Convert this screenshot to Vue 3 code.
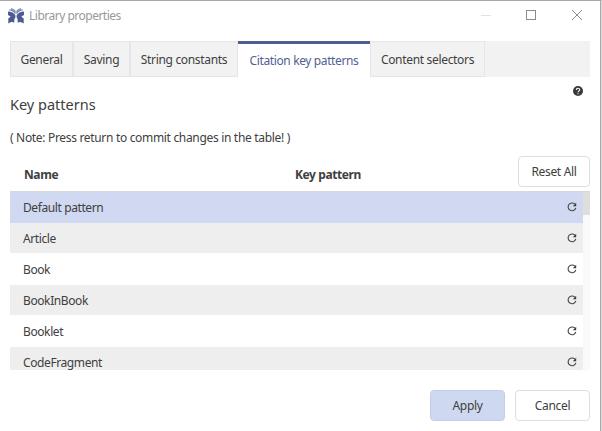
<script setup>
const tabs = [
  { label: 'General', w: 63 },
  { label: 'Saving', w: 57 },
  { label: 'String constants', w: 108 },
  { label: 'Citation key patterns', w: 132, active: true },
  { label: 'Content selectors', w: 115 },
]
const rows = ['Default pattern', 'Article', 'Book', 'BookInBook', 'Booklet', 'CodeFragment']
</script>

<template>
  <div class="window">
    <header class="titlebar">
      <svg class="logo" width="16" height="16" viewBox="0 0 16 16">
        <g id="wing">
          <path d="M0 3.400C3.400 3.400 5.800 4.600 7.400 7.300V9.600C6.200 10.600 6.300 12.500 6.300 14.800C4.400 13.400 2.400 13.800 .3 15.500V10.400L2.700 8.600L0 7Z" fill="#4c5c92" />
          <path d="M1.200 1.900C4.200 1.900 6.200 3.400 7.400 5.800M3.200 .6C5.200 1 6.800 2.300 7.600 4.300" fill="none" stroke="#7f8bb2" stroke-width="1.300" />
        </g>
        <use href="#wing" transform="matrix(-1 0 0 1 16 0)" />
      </svg>
      <span class="title">Library properties</span>
      <svg class="controls" width="110" height="12" viewBox="0 0 110 12">
        <path d="M0 6.500H10" stroke="#e3e3e3" />
        <rect x="45.500" y="1.500" width="9" height="9" fill="none" stroke="#8c8c8c" />
        <path d="M91 1L101 11M101 1L91 11" stroke="#8c8c8c" fill="none" />
      </svg>
    </header>

    <nav class="tabs">
      <div v-for="t in tabs" :key="t.label" class="tab" :class="{ active: t.active }" :style="{ width: t.w + 'px' }">
        <span>{{ t.label }}</span>
      </div>
    </nav>

    <main class="content">
      <div class="help">
        <svg width="10" height="10" viewBox="0 0 10 10">
          <circle cx="5" cy="5" r="5" fill="#3a3a3a" />
          <path d="M3.300 3.900C3.300 1.700 6.700 1.700 6.700 3.800C6.700 4.900 5 5 5 6.300M5 7.200V8.300" fill="none" stroke="#fff" stroke-width="1.100" />
        </svg>
      </div>
      <h1 class="heading">Key patterns</h1>
      <p class="note">( Note: Press return to commit changes in the table! )</p>

      <div class="head">
        <span class="col name">Name</span>
        <span class="col pattern">Key pattern</span>
        <button class="btn reset">Reset All</button>
      </div>
      <div class="table">
        <div class="rows">
          <div v-for="(r, i) in rows" :key="r" class="row" :class="{ selected: i === 0, odd: i % 2 === 1 }">
            <span>{{ r }}</span>
            <svg width="10" height="10" viewBox="0 0 10 10">
              <path d="M7.900 2.200A3.900 3.900 0 1 0 8.800 5.900" fill="none" stroke="#484848" stroke-width="1.150" />
              <path d="M9.200 .8V4.200H5.800Z" fill="#3c3c3c" />
            </svg>
          </div>
        </div>
        <div class="track"><div class="thumb"></div></div>
      </div>
    </main>

    <footer class="footer">
      <button class="btn apply">Apply</button>
      <button class="btn cancel">Cancel</button>
    </footer>
  </div>
</template>

<style>
body { margin: 0; background: #fff; overflow: hidden; }
</style>

<style scoped>
* { box-sizing: border-box; }
.window {
  width: 602px;
  height: 431px;
  border-top: 1px solid #a8a8a8;
  border-right: 1px solid #dcdcdc;
  box-shadow: inset -1px 0 #a8a8a8;
  background: #fff;
  color: #404040;
  font-family: "Noto Sans", "Open Sans", sans-serif;
  font-size: 12px;
  letter-spacing: -0.32px;
  line-height: 16px;
  white-space: nowrap;
  overflow: hidden;
}
.titlebar {
  display: flex;
  align-items: center;
  height: 40px;
  padding: 0 19px 12px 8px;
}
.logo { margin-top: 1px; }
.title { margin-left: 5px; padding-top: 2px; color: #999; letter-spacing: -0.5px; }
.controls { margin-left: auto; margin-right: -9px; }
.tabs {
  display: flex;
  height: 36px;
  width: 580px;
  margin-left: 10px;
  background: #f2f2f2;
}
.tab {
  display: flex;
  align-items: center;
  justify-content: center;
  flex: none;
  border: 1px solid #e6e6e6;
  padding-top: 2px;
}
.tab.active {
  background: #fff;
  border: 0;
  border-top: 3px solid #505f92;
  padding-top: 1px;
  color: #505f92;
  letter-spacing: -0.38px;
}
.content { padding: 0 10px; width: 600px; }
.help { display: flex; justify-content: flex-end; height: 18px; padding: 9px 7px 0 0; }
.heading { margin: 0; font-size: 14.500px; font-weight: 400; line-height: 18px; letter-spacing: 0; }
.note { margin: 17px 0 0; height: 26px; }
.head { display: flex; align-items: flex-start; height: 35px; }
.col { font-weight: 700; padding-top: 11px; letter-spacing: -0.4px; }
.name { width: 285px; padding-left: 14px; }
.btn {
  height: 31px;
  padding: 0;
  border: 1px solid #dedede;
  border-radius: 4px;
  background: #fff;
  color: inherit;
  font: inherit;
  letter-spacing: inherit;
}
.reset { width: 72px; margin-left: auto; }
.table { display: flex; height: 179px; border-top: 1px solid #d8d8d8; overflow: hidden; }
.rows { width: 573px; }
.row {
  display: flex;
  justify-content: space-between;
  height: 31px;
  padding: 8px 6px 0 13px;
  border-bottom: 1px solid #fff;
  letter-spacing: -0.4px;
}
.row svg { margin-top: 2px; }
.odd { background: #eee; }
.selected { background: #d0d9f1; border-bottom-color: #d0d9f1; }
.track { width: 7px; background: #fafafa; }
.thumb { height: 23px; background: #dedede; }
.footer { display: flex; justify-content: flex-end; gap: 10px; padding: 20px 11px 0 0; width: 601px; }
.footer .btn { width: 75px; }
.footer .apply { background: #ced9f1; border-color: #c3cfea; }
</style>
